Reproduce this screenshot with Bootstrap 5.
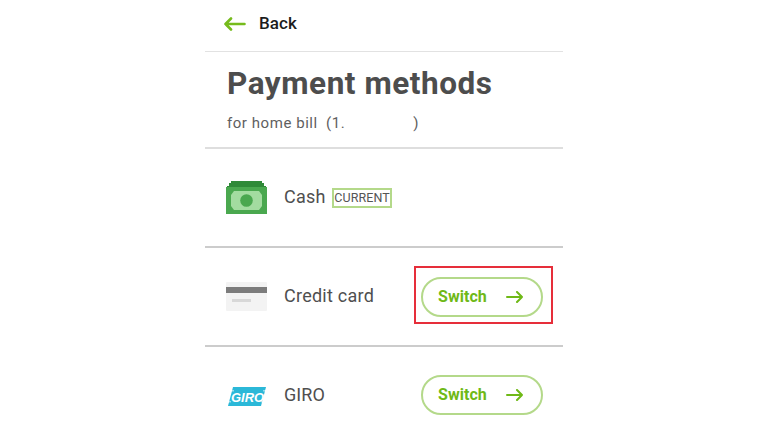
<!DOCTYPE html>
<html lang="en">
<head>
<meta charset="utf-8">
<title>Payment methods</title>
<link href="https://cdn.jsdelivr.net/npm/bootstrap@5.3.0/dist/css/bootstrap.min.css" rel="stylesheet">
<style>
html,body{height:432px;overflow:hidden;background:#fff}
body{font-family:"Roboto","Liberation Sans",sans-serif;color:#4f4f4f}
.phone-col{width:358px;margin-left:205px}
.back-bar{height:52px;border-bottom:1px solid #e2e2e2;padding:0 0 3px 19px;gap:13px}
.back-label{font-size:17px;font-weight:500;color:#1c1c1c;letter-spacing:.1px}
.head-block{height:97px;border-bottom:2px solid #dedede;padding:13px 0 0 22px}
.page-title{font-size:31.5px;font-weight:700;line-height:37px;letter-spacing:.55px;color:#4d4d4d;margin:0}
.page-sub{font-size:15px;line-height:20px;letter-spacing:.55px;color:#5f5f5f;margin-top:11px;white-space:pre}
.pay-row{height:99px;border-bottom:2px solid #cccccc;padding:0 20px 0 21px}
.pay-row.last-row{border-bottom:0}
.pay-ico{width:42px;flex:none;display:block}
.pay-name{font-size:18px;letter-spacing:.25px;color:#4f4f4f;margin:0 0 3px 16px}
.last-row .pay-name{margin-bottom:5px;letter-spacing:.05px}
.cur-tag{font-size:12.5px;line-height:16px;letter-spacing:.1px;color:#555;border:2px solid #b4d98a;padding:0 .5px;margin:1px 0 0 6px}
.switch-wrap{position:relative;margin-left:auto}
.last-row .switch-wrap{margin-bottom:3px}
.switch-btn{width:122px;height:40px;border:2px solid #b4d98a;border-radius:20px;color:#6fb917;background:#fff;font-size:16px;font-weight:700;letter-spacing:.05px;padding:0 18px 0 15px}
.switch-btn:hover{color:#6fb917;background:#fff;border-color:#b4d98a}
.red-box{position:absolute;left:-7px;top:-11px;width:139px;height:58px;border:2px solid #e62e3a;pointer-events:none}
.pay-ico.giro-ico{width:38px;margin:0 2px 1px 2px}
</style>
</head>
<body>
<div class="phone-col">
  <div class="back-bar d-flex align-items-center">
    <svg width="22" height="14" viewBox="0 0 22 14" fill="none" stroke="#76bb1c" stroke-width="2.6" stroke-linecap="round" stroke-linejoin="round"><path d="M1.500 7H20.500M7 1.500 1.500 7 7 12.500"/></svg>
    <span class="back-label">Back</span>
  </div>
  <div class="head-block">
    <h1 class="page-title">Payment methods</h1>
    <div class="page-sub">for home bill <span class="ms-1">(1.</span>               <span class="ms-1">)</span></div>
  </div>
  <div class="pay-row d-flex align-items-center">
    <svg class="pay-ico" height="35" viewBox="0 0 42 35"><path fill="#2f8a38" d="M5 1h31v2h2v3h2v3H1V6h2V3h2z"/><path fill="#4aa84f" d="M0 7h41v27H0z"/><path fill="#a3dca0" d="M8 11h25l3 4v11l-3 4H8l-3-4V15z"/><circle cx="20.500" cy="20.500" r="6.300" fill="#4aa84f"/></svg>
    <span class="pay-name">Cash</span>
    <span class="cur-tag">CURRENT</span>
  </div>
  <div class="pay-row d-flex align-items-center">
    <svg class="pay-ico" height="30" viewBox="0 0 42 30"><rect x="0" y="0" width="41" height="29" rx="1" fill="#f3f3f3"/><rect x="0" y="5" width="41" height="6" fill="#7c7c7c"/><rect x="6" y="17" width="19" height="3" fill="#d8d8d8"/></svg>
    <span class="pay-name">Credit card</span>
    <div class="switch-wrap">
      <button type="button" class="btn switch-btn d-flex align-items-center justify-content-between"><span>Switch</span>
        <svg width="17" height="12" viewBox="0 0 17 12" fill="none" stroke="#6fb917" stroke-width="2" stroke-linecap="round" stroke-linejoin="round"><path d="M1 6h15M11 1 16 6 11 11"/></svg>
      </button>
      <span class="red-box"></span>
    </div>
  </div>
  <div class="pay-row last-row d-flex align-items-center">
    <svg class="pay-ico giro-ico" height="19" viewBox="0 0 38 19"><path fill="#2bb8d8" d="M5 0H38L33 19H0z"/><path fill="#fff" d="M0 14.500h3v.8H0zM33 14.500h3v.8h-3zM3 3.500h3v.8H3zM35 3.500h3v.8h-3z"/><text x="3" y="14.500" font-family="Liberation Sans,sans-serif" font-size="13" font-weight="700" font-style="italic" fill="#fff">GIRO</text></svg>
    <span class="pay-name">GIRO</span>
    <div class="switch-wrap">
      <button type="button" class="btn switch-btn d-flex align-items-center justify-content-between"><span>Switch</span>
        <svg width="17" height="12" viewBox="0 0 17 12" fill="none" stroke="#6fb917" stroke-width="2" stroke-linecap="round" stroke-linejoin="round"><path d="M1 6h15M11 1 16 6 11 11"/></svg>
      </button>
    </div>
  </div>
</div>
</body>
</html>
